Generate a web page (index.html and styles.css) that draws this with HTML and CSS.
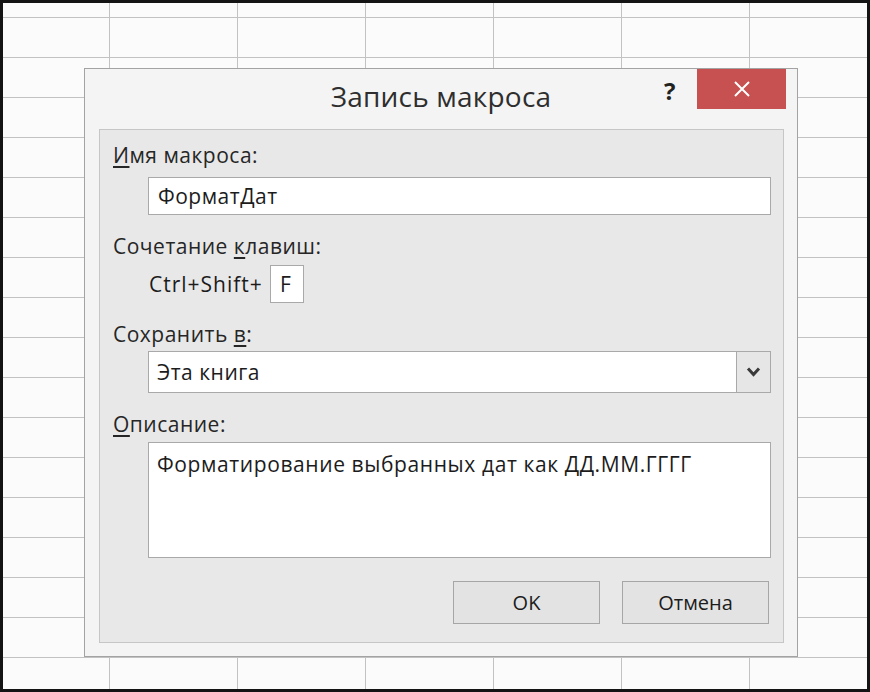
FILE: index.html
```html
<!DOCTYPE html>
<html lang="ru">
<head>
<meta charset="utf-8">
<title>Запись макроса</title>
<link rel="stylesheet" href="styles.css">
</head>
<body>
<div class="sheet">
  <div class="dialog">
    <div class="titlebar">
      <div class="title">Запись макроса</div>
      <div class="help">?</div>
      <div class="close">
        <svg width="18" height="16" viewBox="0 0 18 16"><path d="M2 1 L16 15 M16 1 L2 15" stroke="#fff" stroke-width="2" fill="none"/></svg>
      </div>
    </div>
    <div class="panel">
      <div class="label label-first"><u>И</u>мя макроса:</div>
      <div class="field">ФорматДат</div>
      <div class="label">Сочетание <u>к</u>лавиш:</div>
      <div class="keyrow">
        <span class="keytext">Ctrl+Shift+</span>
        <span class="keybox">F</span>
      </div>
      <div class="label">Сохранить <u>в</u>:</div>
      <div class="combo">
        <div class="combo-text">Эта книга</div>
        <div class="combo-btn">
          <svg width="15" height="12" viewBox="0 0 15 12"><path d="M2 2.5 L7.5 8.5 L13 2.5" stroke="#3a3a3a" stroke-width="3" fill="none"/></svg>
        </div>
      </div>
      <div class="label"><u>О</u>писание:</div>
      <div class="memo">Форматирование выбранных дат как ДД.ММ.ГГГГ</div>
      <div class="buttons">
        <div class="btn">OK</div>
        <div class="btn">Отмена</div>
      </div>
    </div>
  </div>
</div>
</body>
</html>
```
FILE: styles.css
```css
html, body {
  margin: 0;
  padding: 0;
}
body {
  width: 870px;
  height: 692px;
  font-family: "Open Sans", "Liberation Sans", sans-serif;
  background: #fff;
}
.sheet {
  position: relative;
  box-sizing: border-box;
  width: 870px;
  height: 692px;
  border: 3px solid #141414;
  background-color: #fbfbfb;
  background-image:
    linear-gradient(to right, #c2c2c2 1px, transparent 1px),
    linear-gradient(to bottom, #c2c2c2 1px, transparent 1px);
  background-size: 128px 40px, 128px 40px;
  background-position: 106px 0, 0 14px;
}
.dialog {
  position: absolute;
  left: 81px;
  top: 65px;
  width: 714px;
  height: 589px;
  box-sizing: border-box;
  border: 1px solid #a3a3a3;
  background: #f4f4f4;
  display: flex;
  flex-direction: column;
}
.titlebar {
  position: relative;
  height: 60px;
  flex: none;
}
.title {
  text-align: center;
  font-size: 28px;
  line-height: 54px;
  color: #2e2e2e;
  letter-spacing: 0.2px;
}
.help {
  position: absolute;
  left: 579px;
  top: 6px;
  font-size: 24px;
  font-weight: 700;
  color: #222;
  line-height: 32px;
}
.close {
  position: absolute;
  right: 11px;
  top: 0;
  width: 89px;
  height: 40px;
  background: #c75050;
  display: flex;
  align-items: center;
  justify-content: center;
}
.panel {
  flex: 1;
  margin: 0 13px 13px 14px;
  border: 1px solid #c6c6c6;
  background: #e8e8e8;
  padding: 13px 12px 0 13px;
  display: flex;
  flex-direction: column;
  color: #222;
}
.label {
  font-size: 21px;
  letter-spacing: 0.5px;
  line-height: 24px;
  margin-top: 19px;
  color: #262626;
}
.label-first {
  margin-top: 0;
}
.label u {
  text-decoration-thickness: 2px;
  text-underline-offset: 3px;
}
.field {
  margin: 10px 0 0 35px;
  height: 38px;
  box-sizing: border-box;
  border: 1px solid #a9a9a9;
  background: #fff;
  font-size: 21px;
  letter-spacing: 0.5px;
  line-height: 36px;
  padding-left: 9px;
  color: #1c1c1c;
}
.keyrow {
  margin: 7px 0 0 36px;
  display: flex;
  align-items: center;
  height: 38px;
  font-size: 21px;
  color: #1c1c1c;
}
.keytext {
  letter-spacing: 1px;
  width: 121px;
}
.keybox {
  box-sizing: border-box;
  width: 34px;
  height: 38px;
  border: 1px solid #a9a9a9;
  background: #fff;
  line-height: 36px;
  padding-left: 9px;
}
.combo {
  margin: 5px 0 0 35px;
  height: 42px;
  box-sizing: border-box;
  border: 1px solid #a9a9a9;
  background: #fff;
  display: flex;
}
.combo-text {
  flex: 1;
  font-size: 21px;
  letter-spacing: 0.5px;
  line-height: 40px;
  padding-left: 8px;
  color: #1c1c1c;
}
.combo-btn {
  width: 33px;
  border-left: 1px solid #a9a9a9;
  background: #e6e6e6;
  display: flex;
  align-items: center;
  justify-content: center;
}
.memo {
  margin: 6px 0 0 35px;
  height: 116px;
  box-sizing: border-box;
  border: 1px solid #a9a9a9;
  background: #fff;
  font-size: 21px;
  letter-spacing: 0.6px;
  line-height: 24px;
  padding: 9px 8px;
  color: #1c1c1c;
}
.buttons {
  margin-top: 23px;
  display: flex;
  justify-content: flex-end;
  gap: 22px;
  padding-right: 2px;
}
.btn {
  box-sizing: border-box;
  width: 147px;
  height: 43px;
  border: 1px solid #a6a6a6;
  background: #e3e3e3;
  font-size: 20px;
  line-height: 41px;
  text-align: center;
  color: #1c1c1c;
}
```
